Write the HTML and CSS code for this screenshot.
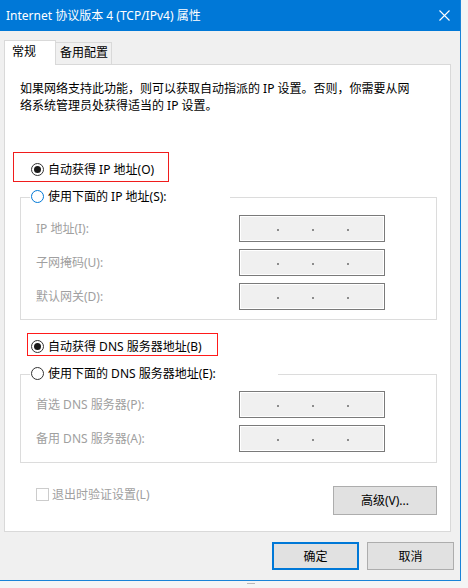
FILE: index.html
```html
<!DOCTYPE html>
<html lang="zh-CN">
<head>
<meta charset="utf-8">
<title>Internet 协议版本 4 (TCP/IPv4) 属性</title>
<link rel="stylesheet" href="styles.css">
</head>
<body>
<div class="window">
  <div class="titlebar">
    <span class="title">Internet 协议版本 4 (TCP/IPv4) 属性</span>
    <svg class="close" width="11" height="11" viewBox="0 0 11 11"><path d="M0.5 0.5 L10.5 10.5 M10.5 0.5 L0.5 10.5" stroke="#fff" stroke-width="1.1" fill="none"/></svg>
  </div>
  <div class="tabs">
    <div class="tab active">常规</div>
    <div class="tab">备用配置</div>
  </div>
  <div class="panel">
    <p class="intro">如果网络支持此功能，则可以获取自动指派的 IP 设置。否则，你需要从网络系统管理员处获得适当的 IP 设置。</p>

    <div class="hl hl-ip">
      <span class="radio checked"></span><span class="lbl">自动获得 IP 地址(O)</span>
    </div>

    <div class="group">
      <div class="group-head head-ip">
        <span class="radio focus"></span><span class="lbl">使用下面的 IP 地址(S):</span>
      </div>
      <div class="field first">
        <span class="flabel">IP 地址(I):</span>
        <span class="ipbox"><i></i><i></i><i></i></span>
      </div>
      <div class="field">
        <span class="flabel">子网掩码(U):</span>
        <span class="ipbox"><i></i><i></i><i></i></span>
      </div>
      <div class="field">
        <span class="flabel">默认网关(D):</span>
        <span class="ipbox"><i></i><i></i><i></i></span>
      </div>
    </div>

    <div class="hl hl-dns">
      <span class="radio checked"></span><span class="lbl">自动获得 DNS 服务器地址(B)</span>
    </div>

    <div class="group group-dns">
      <div class="group-head head-dns">
        <span class="radio"></span><span class="lbl">使用下面的 DNS 服务器地址(E):</span>
      </div>
      <div class="field first">
        <span class="flabel">首选 DNS 服务器(P):</span>
        <span class="ipbox"><i></i><i></i><i></i></span>
      </div>
      <div class="field">
        <span class="flabel">备用 DNS 服务器(A):</span>
        <span class="ipbox"><i></i><i></i><i></i></span>
      </div>
    </div>

    <div class="panel-foot">
      <div class="check-item">
        <span class="checkbox"></span><span class="flabel">退出时验证设置(L)</span>
      </div>
      <button class="btn btn-adv">高级(V)...</button>
    </div>
  </div>
  <div class="actions">
    <button class="btn btn-default">确定</button>
    <button class="btn">取消</button>
  </div>
</div>
<div class="peek"></div>
</body>
</html>
```

FILE: styles.css
```css
html, body {
  margin: 0;
  padding: 0;
}
body {
  background: #f4f4f4;
  font-family: "Noto Sans", "Noto Sans CJK SC", sans-serif;
  font-size: 12px;
  color: #000;
  width: 468px;
  height: 588px;
  overflow: hidden;
  position: relative;
}
.window {
  width: 460px;
  height: 580px;
  background: #f0f0f0;
  border-right: 1px solid #1883d7;
  border-bottom: 1px solid #1883d7;
}
.titlebar {
  height: 31px;
  background: #0078d7;
  display: flex;
  align-items: center;
  padding-left: 6px;
  color: #fff;
  line-height: 17px;
}
.title {
  padding-bottom: 1px;
}
.close {
  margin-left: auto;
  margin-right: 10px;
  margin-bottom: 1px;
}
.tabs {
  margin-top: 9px;
  padding-left: 4px;
  height: 24px;
  display: flex;
  align-items: flex-end;
}
.tab {
  box-sizing: border-box;
  height: 22px;
  width: 56px;
  border: 1px solid #d9d9d9;
  border-left: 0;
  border-bottom: 0;
  padding-left: 4px;
  line-height: 20px;
  background: #f0f0f0;
}
.tab.active {
  position: relative;
  z-index: 1;
  width: 52px;
  height: 25px;
  margin-bottom: -1px;
  border-left: 1px solid #d9d9d9;
  background: #fff;
  padding-left: 7px;
  line-height: 22px;
}
.panel {
  box-sizing: border-box;
  margin-left: 4px;
  width: 447px;
  height: 468px;
  border: 1px solid #d9d9d9;
  background: #fff;
}
.intro {
  margin: 15px 0 0 15px;
  width: 396px;
  line-height: 17px;
}
.hl {
  box-sizing: border-box;
  display: flex;
  align-items: center;
  border: 1px solid #f01c1c;
}
.hl-ip {
  margin: 38px 0 0 8px;
  width: 156px;
  height: 30px;
  padding: 8px 0 3px 17px;
}
.hl-dns {
  margin: 13px 0 0 22px;
  width: 191px;
  height: 23px;
  padding: 4px 0 0 3px;
  border-color: #ff1a1a;
}
.lbl {
  line-height: 17px;
  margin-left: 4px;
  white-space: nowrap;
}
.radio {
  box-sizing: border-box;
  flex: none;
  width: 13px;
  height: 13px;
  border: 1px solid #333;
  border-radius: 50%;
  background: #fff;
  display: flex;
  align-items: center;
  justify-content: center;
}
.radio.focus {
  border-color: #0078d7;
}
.radio.checked::after {
  content: "";
  width: 7px;
  height: 7px;
  border-radius: 50%;
  background: #1a1a1a;
}
.group {
  box-sizing: border-box;
  margin: 15px 0 0 15px;
  width: 417px;
  border: 1px solid #dcdcdc;
  padding-bottom: 9px;
}
.group-dns {
  margin-top: 18px;
  padding-bottom: 10px;
}
.group-head {
  display: flex;
  align-items: center;
  height: 17px;
  margin: -10px 0 0 9px;
  padding-left: 1px;
  background: #fff;
}
.head-ip { width: 199px; }
.head-dns { width: 247px; }
.field {
  display: flex;
  align-items: center;
  height: 27px;
  margin-top: 7px;
  padding-left: 15px;
}
.field.first {
  margin-top: 10px;
}
.group-dns .field.first {
  margin-top: 9px;
}
.flabel {
  color: #a0a0a0;
  line-height: 17px;
  white-space: nowrap;
}
.field .flabel {
  width: 203px;
}
.ipbox {
  box-sizing: border-box;
  width: 146px;
  height: 27px;
  border: 1px solid #7a7a7a;
  background: #f0f0f0;
  box-shadow: inset -1px -1px 0 #fff, inset 1px 1px 0 #fff;
  display: flex;
  align-items: center;
  padding-left: 37px;
  gap: 33px;
}
.ipbox i {
  display: block;
  width: 2px;
  height: 2px;
  margin-top: 2px;
  background: #8c8c8c;
}
.panel-foot {
  display: flex;
  align-items: flex-start;
  justify-content: space-between;
  margin-top: 23px;
  padding: 0 13px 0 31px;
}
.check-item {
  display: flex;
  align-items: center;
  height: 13px;
  margin-top: 2px;
  gap: 3px;
}
.checkbox {
  box-sizing: border-box;
  width: 13px;
  height: 13px;
  border: 1px solid #cccccc;
  background: #fff;
}
.btn {
  box-sizing: border-box;
  height: 28px;
  width: 87px;
  border: 1px solid #adadad;
  background: #e1e1e1;
  font-family: inherit;
  font-size: 12px;
  color: #000;
  padding: 0;
  line-height: 17px;
}
.btn-adv {
  width: 104px;
  height: 29px;
}
.btn-default {
  border: 2px solid #0078d7;
}
.actions {
  display: flex;
  justify-content: flex-end;
  gap: 8px;
  margin-top: 10px;
  padding-right: 6px;
}
.peek {
  position: absolute;
  left: 247px;
  top: 583px;
  width: 8px;
  height: 4px;
  border-top: 1px solid #b8b8b8;
  border-bottom: 1px solid #b8b8b8;
}
```
